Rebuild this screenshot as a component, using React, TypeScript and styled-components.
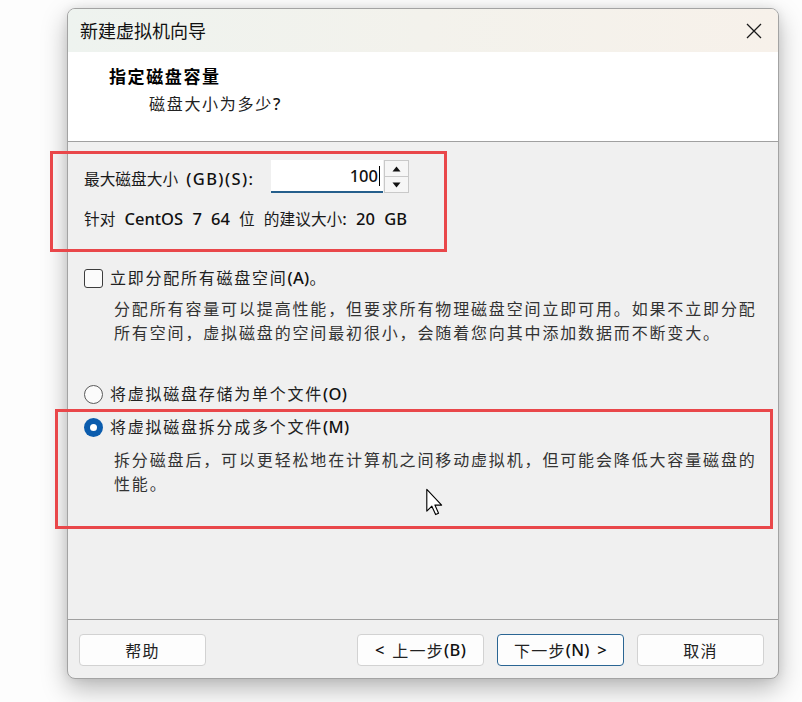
import React from "react";
import styled, { createGlobalStyle } from "styled-components";

const GlobalStyle = createGlobalStyle`
  html, body { margin: 0; padding: 0; background: #fdfdfd; }
  * { box-sizing: border-box; }
  body { font-family: "Noto Sans", "Noto Sans CJK SC", sans-serif; }
`;

const Page = styled.div`
  position: relative;
  width: 802px;
  height: 702px;
  padding: 8px 0 0 67px;
  overflow: hidden;
`;

const Dialog = styled.div`
  width: 712px;
  height: 671px;
  border: 1px solid #a3a3a3;
  border-radius: 8px;
  overflow: hidden;
  display: flex;
  flex-direction: column;
  background: #f0f0f0;
  box-shadow: 0 10px 26px rgba(0, 0, 0, 0.28), 0 0 10px rgba(0, 0, 0, 0.08);
`;

const TitleBar = styled.div`
  height: 43px;
  flex: none;
  display: flex;
  align-items: center;
  justify-content: space-between;
  padding: 0 16px 0 12px;
  background: linear-gradient(90deg, #eef3ef 0%, #f3f2ec 50%, #f7f1ea 100%);
`;

const TitleText = styled.div`
  font-family: "Noto Sans CJK SC", sans-serif;
  font-size: 18px;
  color: #111;
  line-height: 22px;
  margin-top: -1px;
`;

const Header = styled.div`
  height: 90px;
  flex: none;
  background: #ffffff;
  border-bottom: 1px solid #a0a0a0;
  display: flex;
  flex-direction: column;
  padding-top: 13px;
`;

const Heading = styled.div`
  font-family: "Noto Sans CJK SC", sans-serif;
  font-weight: 700;
  font-size: 17px;
  letter-spacing: 1.6px;
  line-height: 22px;
  color: #000;
  padding-left: 41px;
`;

const SubHeading = styled.div`
  font-family: "Noto Sans", "Noto Sans CJK SC", sans-serif;
  font-size: 16px;
  letter-spacing: 1.7px;
  line-height: 22px;
  color: #222;
  padding-left: 81px;
  margin-top: 6px;
`;

const Body = styled.div`
  flex: 1;
  display: flex;
  flex-direction: column;
  padding: 18px 16px 0 16px;
`;

const SizeRow = styled.div`
  display: flex;
  align-items: center;
  height: 33px;
`;

const Label = styled.div`
  font-family: "Noto Sans", "Noto Sans CJK SC", sans-serif;
  font-size: 15.7px;
  color: #1a1a1a;
  line-height: 22px;
  word-spacing: 4px;
  width: 187px;
  margin-top: 4px;
`;

const Latin = styled.span<{ $spacing?: number }>`
  font-family: "Noto Sans", sans-serif;
  font-weight: 500;
  font-size: 16.5px;
  letter-spacing: ${(p) => p.$spacing ?? 0}px;
  color: #111;
`;

const NumberField = styled.div`
  width: 112px;
  height: 33px;
  background: #ffffff;
  border-bottom: 2px solid #255f8c;
  display: flex;
  align-items: center;
  justify-content: flex-end;
  padding-right: 3px;
  font-family: "Noto Sans", sans-serif;
  font-weight: 500;
  font-size: 16.5px;
  color: #111;
`;

const Caret = styled.span`
  display: inline-block;
  width: 1px;
  height: 20px;
  background: #000;
  margin-left: 1px;
`;

const Spinner = styled.div`
  width: 25px;
  height: 33px;
  display: flex;
  flex-direction: column;
  margin-left: 1px;
`;

const SpinButton = styled.div`
  flex: 1;
  display: flex;
  align-items: center;
  justify-content: center;
  background: #f6f6f6;
  border: 1px solid #c9c9c9;
  & + & { border-top: none; }
`;

const Hint = styled.div`
  font-family: "Noto Sans", "Noto Sans CJK SC", sans-serif;
  font-size: 15.7px;
  color: #1a1a1a;
  line-height: 22px;
  word-spacing: 5px;
  margin-top: 15px;
`;

const OptionRow = styled.div<{ $gap: number }>`
  display: flex;
  align-items: center;
  height: 22px;
  margin-top: ${(p) => p.$gap}px;
`;

const CheckBox = styled.div`
  width: 19px;
  height: 19px;
  border: 1.5px solid #3c3c3c;
  border-radius: 3px;
  background: #fbfbfb;
  flex: none;
`;

const Radio = styled.div<{ $checked?: boolean }>`
  width: 19px;
  height: 19px;
  border-radius: 50%;
  flex: none;
  display: flex;
  align-items: center;
  justify-content: center;
  border: ${(p) => (p.$checked ? "none" : "1px solid #5a5a5a")};
  background: ${(p) => (p.$checked ? "#0b5cad" : "#fbfbfb")};
  &::after {
    content: "";
    display: ${(p) => (p.$checked ? "block" : "none")};
    width: 7px;
    height: 7px;
    border-radius: 50%;
    background: #ffffff;
  }
`;

const OptionText = styled.div`
  font-family: "Noto Sans", "Noto Sans CJK SC", sans-serif;
  font-size: 16px;
  letter-spacing: 1.75px;
  line-height: 22px;
  color: #222;
  margin-left: 7px;
`;

const Key = styled.span`
  font-family: "Noto Sans", sans-serif;
  font-weight: 500;
  font-size: 16.5px;
  letter-spacing: 0.3px;
  word-spacing: 3px;
  color: #111;
`;

const Description = styled.div<{ $gap: number }>`
  font-family: "Noto Sans CJK SC", sans-serif;
  font-size: 16px;
  letter-spacing: 1.85px;
  line-height: 24px;
  color: #333;
  padding-left: 30px;
  margin-top: ${(p) => p.$gap}px;
  white-space: pre-line;
`;

const Footer = styled.div`
  flex: none;
  height: 59px;
  border-top: 1px solid #a0a0a0;
  display: flex;
  align-items: center;
  padding: 0 14px 0 11px;
  gap: 13px;
`;

const Spacer = styled.div`
  flex: 1;
`;

const Button = styled.div<{ $primary?: boolean }>`
  width: 127px;
  height: 32px;
  display: flex;
  align-items: center;
  justify-content: center;
  background: #fdfdfd;
  border: 1px solid ${(p) => (p.$primary ? "#2a6593" : "#d2d2d2")};
  border-radius: 4px;
  font-family: "Noto Sans", "Noto Sans CJK SC", sans-serif;
  font-size: 16px;
  letter-spacing: 1.3px;
  color: #222;
  margin-top: 1px;
  white-space: pre;
`;

const Annotation = styled.div<{ $x: number; $y: number; $w: number; $h: number }>`
  position: absolute;
  left: ${(p) => p.$x}px;
  top: ${(p) => p.$y}px;
  width: ${(p) => p.$w}px;
  height: ${(p) => p.$h}px;
  border: 3px solid #e9474a;
  pointer-events: none;
`;

const Pointer = styled.svg`
  position: absolute;
  left: 425px;
  top: 488px;
`;

const CloseIcon = () => (
  <svg width="16" height="16" viewBox="0 0 16 16">
    <path d="M1 1 L15 15 M15 1 L1 15" stroke="#1a1a1a" strokeWidth="1.3" fill="none" />
  </svg>
);

const UpArrow = () => (
  <svg width="9" height="6" viewBox="0 0 9 6">
    <path d="M4.5 0.5 L8.5 5.5 L0.5 5.5 Z" fill="#111" />
  </svg>
);

const DownArrow = () => (
  <svg width="9" height="6" viewBox="0 0 9 6">
    <path d="M0.5 0.5 L8.5 0.5 L4.5 5.5 Z" fill="#111" />
  </svg>
);

export default function App() {
  return (
    <>
      <GlobalStyle />
      <Page>
        <Dialog>
          <TitleBar>
            <TitleText>新建虚拟机向导</TitleText>
            <CloseIcon />
          </TitleBar>
          <Header>
            <Heading>指定磁盘容量</Heading>
            <SubHeading>
              磁盘大小为多少<Key>?</Key>
            </SubHeading>
          </Header>
          <Body>
            <SizeRow>
              <Label>
                最大磁盘大小 <Latin $spacing={1.4}>(GB)(S):</Latin>
              </Label>
              <NumberField>
                100
                <Caret />
              </NumberField>
              <Spinner>
                <SpinButton>
                  <UpArrow />
                </SpinButton>
                <SpinButton>
                  <DownArrow />
                </SpinButton>
              </Spinner>
            </SizeRow>
            <Hint>
              针对 <Latin>CentOS 7 64</Latin> 位 的建议大小<Latin>: 20 GB</Latin>
            </Hint>

            <OptionRow $gap={37}>
              <CheckBox />
              <OptionText>
                立即分配所有磁盘空间<Key>(A)</Key>。
              </OptionText>
            </OptionRow>
            <Description $gap={7}>
              {"分配所有容量可以提高性能，但要求所有物理磁盘空间立即可用。如果不立即分配\n所有空间，虚拟磁盘的空间最初很小，会随着您向其中添加数据而不断变大。"}
            </Description>

            <OptionRow $gap={39}>
              <Radio />
              <OptionText>
                将虚拟磁盘存储为单个文件<Key>(O)</Key>
              </OptionText>
            </OptionRow>
            <OptionRow $gap={11}>
              <Radio $checked />
              <OptionText>
                将虚拟磁盘拆分成多个文件<Key>(M)</Key>
              </OptionText>
            </OptionRow>
            <Description $gap={9}>
              {"拆分磁盘后，可以更轻松地在计算机之间移动虚拟机，但可能会降低大容量磁盘的\n性能。"}
            </Description>
          </Body>
          <Footer>
            <Button>帮助</Button>
            <Spacer />
            <Button>
              <Key>&lt; </Key>上一步<Key>(B)</Key>
            </Button>
            <Button $primary>
              下一步<Key>(N) &gt;</Key>
            </Button>
            <Button>取消</Button>
          </Footer>
        </Dialog>

        <Annotation $x={50} $y={151} $w={397} $h={101} />
        <Annotation $x={55} $y={409} $w={718} $h={120} />

        <Pointer width="19" height="28" viewBox="0 0 13 20">
          <path
            d="M1 1 V16.5 L4.6 13 L7.3 19 L9.4 18 L6.8 12.2 H11.6 Z"
            fill="#ffffff"
            stroke="#000"
            strokeWidth="0.8"
            strokeLinejoin="round"
          />
        </Pointer>
      </Page>
    </>
  );
}
